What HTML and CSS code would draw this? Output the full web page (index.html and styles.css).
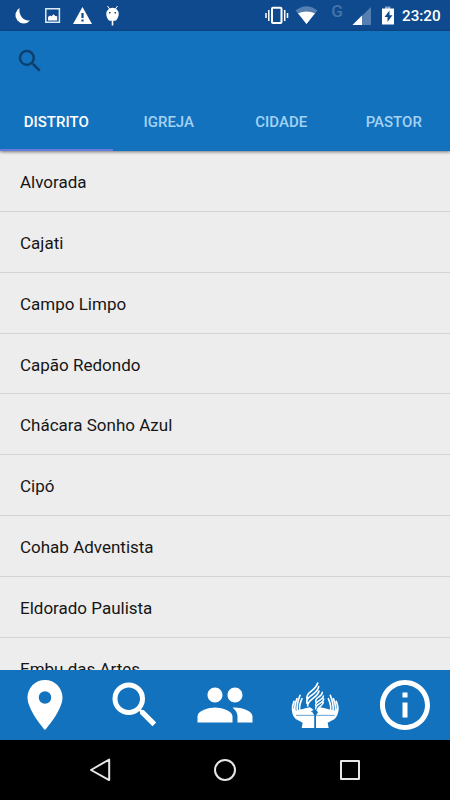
FILE: index.html
```html
<!DOCTYPE html>
<html lang="pt-BR">
<head>
    <meta charset="UTF-8">
    <meta name="viewport" content="width=device-width, initial-scale=1">
    <title>Distritos</title>
    <link rel="stylesheet" href="styles.css">
</head>
<body>
    <!-- Status bar -->
    <div class="status-bar">
        <svg class="status-left" width="150" height="31" viewBox="0 0 150 31" fill="#fff">
            <path d="M19.500 8A8.300 8.300 0 1 0 30.200 20.300C24.500 21.800 18.300 16 19.500 8z"/>
            <path d="M45.800 8.800h13.600v13.400H45.800z" fill="none" stroke="#dceaf5" stroke-width="1.500"/>
            <path d="M48 20.500v-3.500l2-1.500 1.500.8 2-2 1.800 1.700 1.900.2v4.300z"/>
            <path d="M82.500 7L92 24H73z"/>
            <path d="M81.400 13h2.200v5h-2.200zM81.400 19.500h2.200v2h-2.200z" fill="#0f4a8e"/>
            <path d="M107.500 6l2.500 3.500M117.500 6L115 9.500" stroke="#fff" stroke-width="1"/>
            <path d="M106.300 14a6.200 6.200 0 0 1 12.400 0c0 3-2 6.800-4 6.800h-1.400V25.500h-1.600V20.800h-1.400c-2 0-4-3.800-4-6.800z"/>
            <path d="M109 12h1.500v1.500H109zM114.500 12h1.500v1.500h-1.500z" fill="#0f4a8e"/>
        </svg>
        <svg class="status-right" width="140" height="31" viewBox="260 0 140 31" fill="#fff">
            <rect x="272" y="7.800" width="9.500" height="15.200" rx="1" fill="none" stroke="#fff" stroke-width="2"/>
            <path d="M268.800 10v11M266 13v5M284.700 10v11M287.500 13v5" stroke="#fff" stroke-width="1.500"/>
            <path d="M295.500 10.500Q306.500 2 317.500 10.500L306.500 24z" fill="#547fb0"/>
            <path d="M298 13.300Q306.500 9.500 315 13.300L306.500 24z"/>
            <text x="331.300" y="17" class="network">G</text>
            <path d="M371 7v18h-18.500z" fill="#547fb0"/>
            <path d="M362 15.500V25h-9.500z"/>
            <path d="M385 6.500h5.500V9H385z" fill="#85a5c8"/>
            <path d="M382 8.500h12V24.500H382z"/>
            <path d="M389.500 10.500l-5 6.500h3v5l5-6.800h-3z" fill="#0f4a8e"/>
        </svg>
        <span class="clock">23:20</span>
    </div>

    <!-- Search and tabs -->
    <header class="app-bar">
        <div class="search">
            <svg width="30" height="30" viewBox="0 0 24 24"><path d="M15.500 14h-.79l-.28-.27A6.470 6.470 0 0 0 16 9.500 6.500 6.500 0 1 0 9.500 16c1.610 0 3.090-.59 4.230-1.570l.27.28v.79l5 4.990L20.490 19l-4.990-5zm-6 0C7.010 14 5 11.990 5 9.500S7.010 5 9.500 5 14 7.010 14 9.500 11.990 14 9.500 14z"/></svg>
        </div>
        <nav class="tabs">
            <a class="tab active">DISTRITO</a>
            <a class="tab">IGREJA</a>
            <a class="tab">CIDADE</a>
            <a class="tab">PASTOR</a>
        </nav>
    </header>

    <ul class="list">
        <li>Alvorada</li>
        <li>Cajati</li>
        <li>Campo Limpo</li>
        <li>Capão Redondo</li>
        <li>Chácara Sonho Azul</li>
        <li>Cipó</li>
        <li>Cohab Adventista</li>
        <li>Eldorado Paulista</li>
        <li>Embu das Artes</li>
    </ul>

    <!-- Bottom menu -->
    <nav class="bottom-menu">
        <svg viewBox="0 0 24 24"><path d="M12 2C8.130 2 5 5.130 5 9c0 5.250 7 13 7 13s7-7.750 7-13c0-3.870-3.130-7-7-7zm0 9.500a2.500 2.500 0 0 1 0-5 2.500 2.500 0 0 1 0 5z"/></svg>
        <svg viewBox="0 0 24 24"><path d="M15.500 14h-.79l-.28-.27A6.470 6.470 0 0 0 16 9.500 6.500 6.500 0 1 0 9.500 16c1.610 0 3.090-.59 4.230-1.570l.27.28v.79l5 4.990L20.490 19l-4.990-5zm-6 0C7.010 14 5 11.990 5 9.500S7.010 5 9.500 5 14 7.010 14 9.500 11.990 14 9.500 14z"/></svg>
        <svg viewBox="0 0 24 24"><path d="M16 11c1.660 0 2.990-1.340 2.990-3S17.660 5 16 5s-3 1.340-3 3 1.340 3 3 3zm-8 0c1.660 0 2.990-1.340 2.990-3S9.660 5 8 5 5 6.340 5 8s1.340 3 3 3zm0 2c-2.330 0-7 1.170-7 3.500V19h14v-2.500c0-2.330-4.670-3.500-7-3.500zm8 0c-.29 0-.62.02-.97.05 1.160.84 1.970 1.970 1.970 3.450V19h6v-2.500c0-2.330-4.670-3.500-7-3.500z"/></svg>
        <svg viewBox="15 15 180 180">
            <!-- hands -->
            <g id="hand">
                <path d="M36 112C35 128 38 138 47 147L68 158L65 174H103V136L97 127L102 121L90 112L76 115L68 117L59 119L48 122z"/>
                <path d="M38 122Q36 108 42 94M45 122Q42 108 51 86M52 122Q49 106 60 76M59 120Q57 106 66 86" fill="none" stroke="#fff" stroke-width="5" stroke-linecap="round"/>
            </g>
            <use href="#hand" transform="matrix(-1 0 0 1 211 0)"/>
            <path d="M48 136H164M105 122V174" stroke="#1272be" stroke-width="2"/>
            <path d="M92 124l9-4 3 3-7 3z" fill="#1272be"/>
            <!-- flame -->
            <g fill="none" stroke="#fff" stroke-width="5" stroke-linecap="round">
                <path d="M81 91C74 66 107 64 113 39M81 100C75 76 112 76 116 50M83 108C81 88 113 84 117 63"/>
                <path d="M108 97C101 83 127 82 127 67M107 107C103 93 131 90 130 78M107 116C105 102 132 99 131 87M112 121C113 110 130 107 130 97" stroke-width="4.500"/>
            </g>
        </svg>
        <svg viewBox="0 0 24 24"><path d="M11 17h2v-6h-2v6zm1-15C6.480 2 2 6.480 2 12s4.480 10 10 10 10-4.480 10-10S17.520 2 12 2zm0 18c-4.410 0-8-3.590-8-8s3.590-8 8-8 8 3.590 8 8-3.590 8-8 8zM11 9h2V7h-2v2z"/></svg>
    </nav>

    <!-- System buttons -->
    <div class="system-bar">
        <svg viewBox="0 0 30 30"><path d="M24.200 4.500v20.600L6 15z"/></svg>
        <svg viewBox="0 0 30 30"><circle cx="15" cy="15" r="10"/></svg>
        <svg viewBox="0 0 30 30"><rect x="6" y="6" width="18" height="18"/></svg>
    </div>
</body>
</html>
```
FILE: styles.css
```css
* { box-sizing: border-box; }
body { margin: 0; height: 800px; display: flex; flex-direction: column; overflow: hidden; font-family: Roboto, sans-serif; background: #ededed; }
svg { display: block; flex-shrink: 0; }

.status-bar { display: flex; align-items: center; height: 31px; background: #0f4a8e; color: #fff; flex-shrink: 0; }
.status-right { margin-left: auto; }
.network { font-size: 17px; font-weight: 500; fill: #4674a8; }
.clock { width: 50px; padding-left: 2px; font-size: 15.2px; font-weight: 500; line-height: 31px; padding-top: 2px; }

.app-bar { height: 120px; background: #1272be; flex-shrink: 0; position: relative; box-shadow: 0 1px 3px rgba(0, 0, 0, 0.5); }
.search { height: 61px; padding: 15px; fill: #0d3f6c; }
.tabs { display: flex; height: 59px; }
.tab { flex: 1; text-align: center; font-size: 15px; font-weight: 500; line-height: 60px; color: #a3d2f3; }
.tab.active { color: #fff; border-bottom: 2px solid #667bdc; }

.list { flex: 1; min-height: 0; overflow: hidden; margin: 0; padding: 0; list-style: none; }
.list li { height: 60.85px; padding-left: 20px; border-bottom: 1px solid #d3d3d3; font-size: 17px; line-height: 62px; color: #161616; }

.bottom-menu { display: flex; justify-content: space-around; align-items: center; height: 70px; background: #1272be; fill: #fff; flex-shrink: 0; }
.bottom-menu svg { width: 60px; height: 60px; }

.system-bar { display: flex; justify-content: center; align-items: center; gap: 95px; height: 60px; background: #000; flex-shrink: 0; }
.system-bar svg { width: 30px; height: 30px; fill: none; stroke: #e6e6e6; stroke-width: 2; stroke-linejoin: round; }
```
